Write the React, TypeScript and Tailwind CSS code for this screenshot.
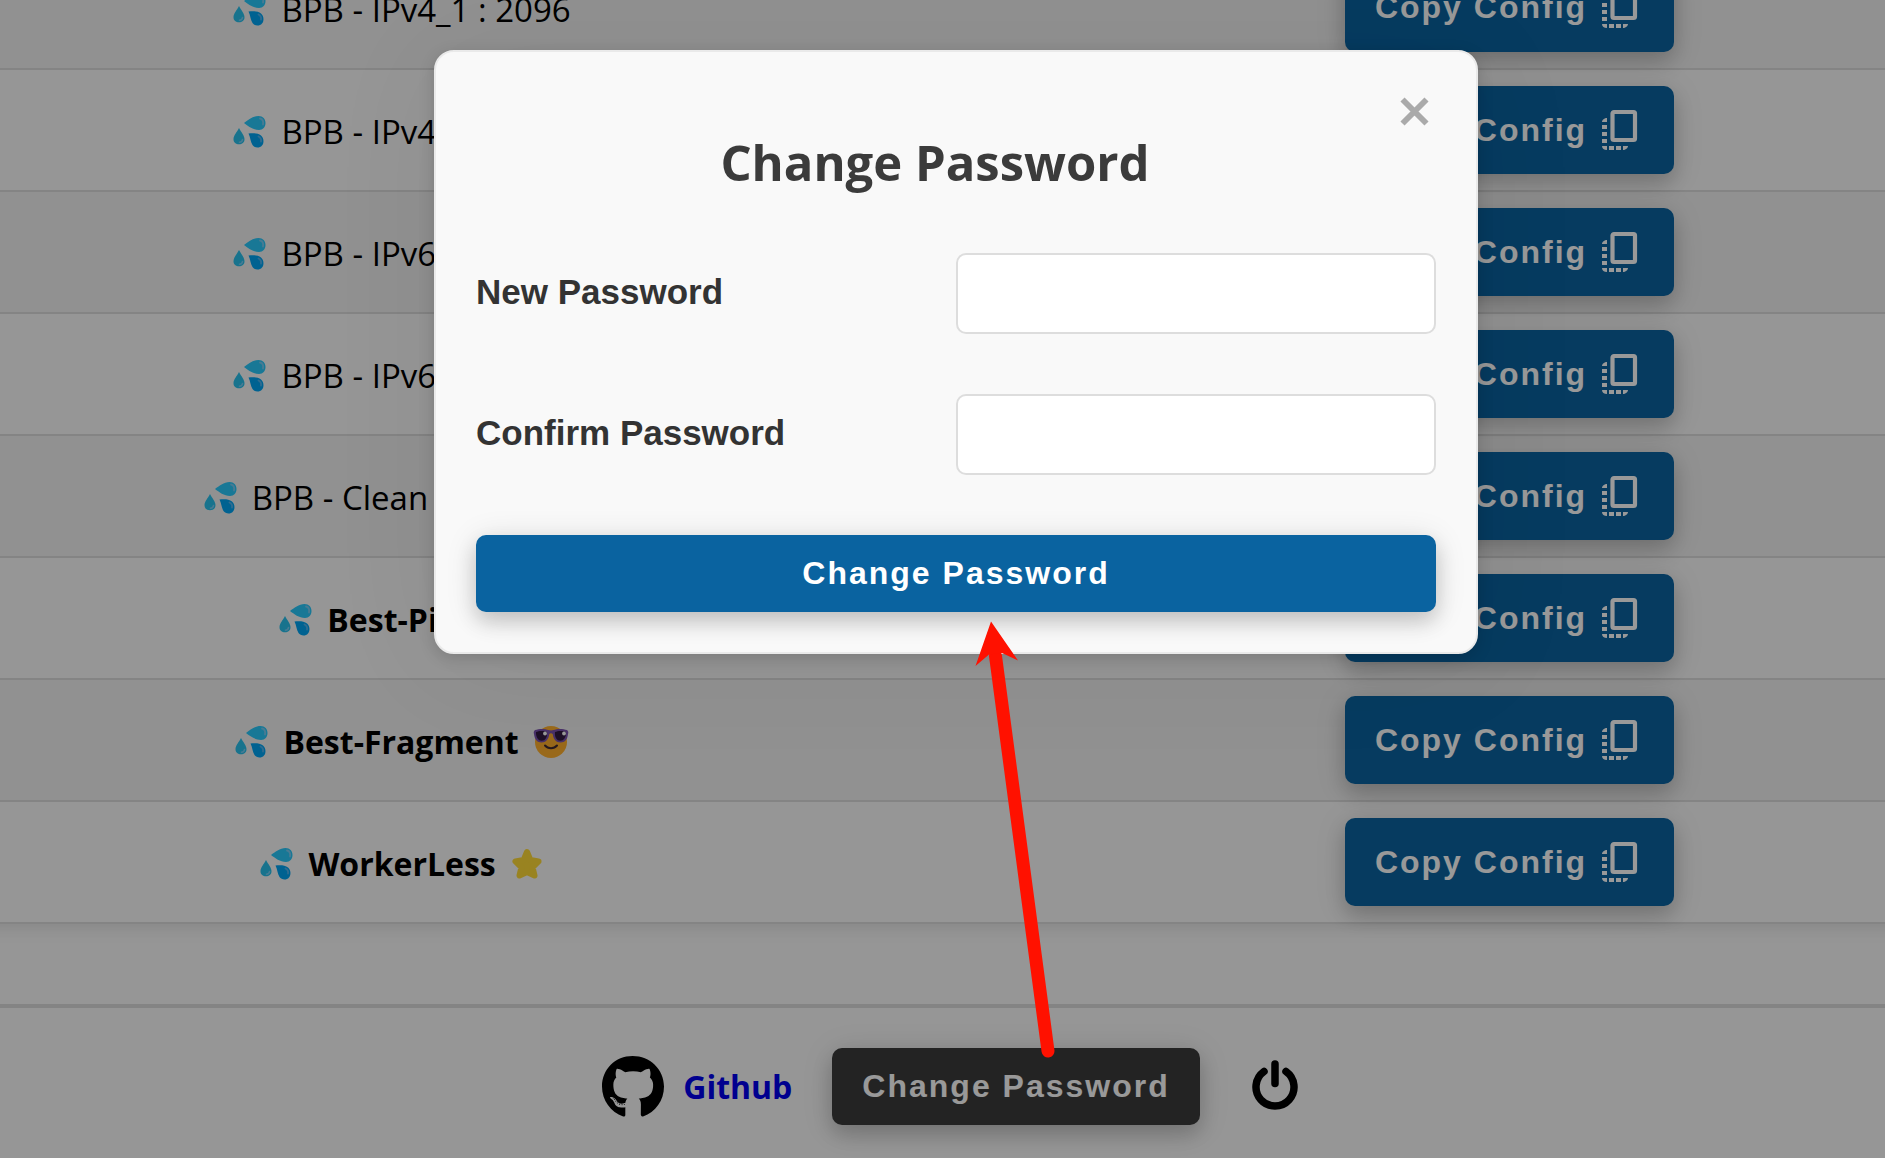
import type { ReactNode } from "react";
import { FaGithub } from "react-icons/fa";

function Drops() {
  return (
    <svg viewBox="0 0 34 34" className="size-[34px] shrink-0" aria-hidden="true">
      <path d="M11 8C15 5 20 1 25.500 1C30 1 32.500 4 32.500 8C32.500 12 30 15 26 15C20 15 15 11 11 8Z" fill="#28c8fa" />
      <path d="M27 3.500C29.500 4 30.500 6.500 30 9.500" stroke="#78cdf5" strokeWidth="1.800" strokeLinecap="round" fill="none" />
      <path d="M6 13C8 17 11.500 20.500 11.500 24.200C11.500 27.500 9 29.200 6 29.200C3 29.200 .5 27.500 .5 24.200C.5 20.500 4 17 6 13Z" fill="#28c0ec" />
      <path d="M9.500 24.500C9.300 26 8 27.200 6.500 27.300" stroke="#78cdf5" strokeWidth="1.600" strokeLinecap="round" fill="none" />
      <path d="M15.500 18.500C20 18 25 18 28 20.500C31 23 31.200 28 29 30.500C26.500 33.500 21.500 33 19.500 30C17.500 27 17.500 22.500 15.500 18.500Z" fill="#00a4f2" />
      <path d="M25.500 21.500C27.500 22.500 28.500 24 28 26.500" stroke="#50b4f0" strokeWidth="1.800" strokeLinecap="round" fill="none" />
    </svg>
  );
}

function CoolFace() {
  return (
    <svg viewBox="0 0 36 34" className="h-[34px] w-[36px] shrink-0" aria-hidden="true">
      <circle cx="18" cy="17" r="16" fill="#ffb02e" />
      <path d="M2 5C6 3.500 12 3.500 15.500 5C17 5.600 19 5.600 20.500 5C24 3.500 30 3.500 34 5C35.500 6 35.500 8 35 9C34.500 14 32 17.500 27.500 17.500C23 17.500 20.500 14.500 19.700 9C18.800 8 17.200 8 16.300 9C15.500 14.500 13 17.500 8.500 17.500C4 17.500 1.500 14 1 9C.5 8 .5 6 2 5Z" fill="#7b53ad" />
      <path d="M3 7C6 5.500 11 5.500 14 7C14.500 12 12.500 15.800 8.700 15.800C5 15.800 2.800 12 3 7Z" fill="#321b41" />
      <path d="M22 7C25 5.500 30 5.500 33 7C33.200 12 31 15.800 27.300 15.800C23.500 15.800 21.500 12 22 7Z" fill="#321b41" />
      <circle cx="12" cy="8.500" r="1.900" fill="#fff" />
      <circle cx="31" cy="8.500" r="1.900" fill="#fff" />
      <path d="M12 20.500C15 24 21 24 24 20.500" stroke="#402a32" strokeWidth="2" strokeLinecap="round" fill="none" />
    </svg>
  );
}

function Star() {
  return (
    <svg viewBox="0 0 34 34" className="size-[34px] shrink-0" aria-hidden="true">
      <path d="M17 5L20.300 13L28.500 14.400L22.500 20.300L24.500 28.500L17 25L9.500 28.500L11.500 20.300L5.500 14.400L13.700 13Z" fill="#ffda37" stroke="#ffda37" strokeWidth="6" strokeLinejoin="round" />
    </svg>
  );
}

function Burst() {
  return (
    <svg viewBox="0 0 34 34" className="size-[34px] shrink-0" aria-hidden="true">
      <path d="M17 1L21 10L31 6L26 15L33 20L24 23L25 32L17 26L9 32L10 23L1 20L8 15L3 6L13 10Z" fill="#f92f60" />
    </svg>
  );
}

function CopyIcon() {
  return (
    <svg viewBox="0 0 48 48" className="size-12 shrink-0" fill="currentColor" aria-hidden="true">
      <rect x="16.500" y="6" width="22.500" height="28" rx="1.500" fill="none" stroke="currentColor" strokeWidth="4.200" />
      <path d="M11 12V16H6C6 14 8.500 12 11 12ZM6 19H11V23H6ZM6 26H11V30H6ZM6 33H11V37H6ZM6 40H11V44C8 44 6 42.500 6 40ZM13 40H18V44H13ZM20 40H25V44H20ZM27 40H32C32 42 29.500 44 27 44Z" />
    </svg>
  );
}

function PowerIcon() {
  return (
    <svg viewBox="0 0 46 50" className="h-[50px] w-[46px]" fill="none" stroke="currentColor" strokeWidth="7.500" strokeLinecap="round" aria-hidden="true">
      <path d="M23 4V23.500" />
      <path d="M12 11.500A19 19 0 1 0 34 11.500" />
    </svg>
  );
}

type Row = { label: string; bold?: boolean; tail?: ReactNode };

const rows: Row[] = [
  { label: "BPB - IPv4_1 : 2096" },
  { label: "BPB - IPv4_2 : 2096" },
  { label: "BPB - IPv6_1 : 2096" },
  { label: "BPB - IPv6_2 : 2096" },
  { label: "BPB - Clean IP_1 : 2096" },
  { label: "Best-Ping", bold: true, tail: <Burst /> },
  { label: "Best-Fragment", bold: true, tail: <CoolFace /> },
  { label: "WorkerLess", bold: true, tail: <Star /> },
];

const buttonBase =
  "rounded-[10px] font-['Liberation_Sans',Arial,sans-serif] text-[32px] leading-[37px] font-bold tracking-[2px] text-white shadow-[0_10px_20px_rgba(0,0,0,0.16),0_4px_32px_rgba(0,0,0,0.12)]";

function ConfigTable() {
  return (
    <table className="-mt-[53px] -ml-[8.75%] w-[117.5%] table-fixed border-collapse shadow-[0_4px_16px_rgba(0,0,0,0.1)]">
      <colgroup>
        <col className="w-[51.2%]" />
        <col />
      </colgroup>
      <tbody>
        {rows.map((row) => (
          <tr key={row.label} className="h-[122px] border-b-2 border-[#dddddd] odd:bg-[#f2f2f2] even:bg-[#fafafa]">
            <td className="p-0">
              <div
                className={
                  row.bold
                    ? "flex items-center justify-center gap-[14px] pt-1 text-[32px] font-bold"
                    : "flex items-center justify-center gap-[14px] pt-1 text-[33px]"
                }
              >
                <Drops />
                <span className="whitespace-nowrap">{row.label}</span>
                {row.tail}
              </div>
            </td>
            <td className="p-0 text-center">
              <button type="button" className={`${buttonBase} inline-flex h-[88px] items-center gap-[9px] bg-[#0a63a0] px-[30px] align-middle whitespace-nowrap`}>
                Copy Config
                <CopyIcon />
              </button>
            </td>
          </tr>
        ))}
      </tbody>
    </table>
  );
}

function Footer() {
  return (
    <footer className="mt-20 flex items-center justify-center border-t-4 border-[#dddddd] pt-10 pb-8 pl-[14px]">
      <FaGithub className="size-16 text-black" aria-hidden="true" />
      <a href="#github" className="ml-[18px] text-[32px] font-bold text-[#0000ee]">
        Github
      </a>
      <button type="button" className={`${buttonBase} ml-10 bg-[#3b3b3b] px-[30px] py-5`}>
        Change Password
      </button>
      <button type="button" aria-label="Log out" className="ml-[52px] pb-1 text-black">
        <PowerIcon />
      </button>
    </footer>
  );
}

const fields = [
  { id: "new-password", label: "New Password" },
  { id: "confirm-password", label: "Confirm Password" },
];

function PasswordModal() {
  return (
    <div className="absolute inset-0 flex items-start justify-center bg-black/40 pt-[50px] pl-[27px]">
      <form
        role="dialog"
        aria-labelledby="modal-title"
        className="w-full max-w-[1044px] rounded-[20px] border-2 border-[#eaeaea] bg-[#f9f9f9] p-10 shadow-[0_4px_16px_rgba(0,0,0,0.15),0_8px_120px_rgba(0,0,0,0.06)]"
      >
        <div className="flex h-[161px] items-start gap-[6px]">
          <h2 id="modal-title" className="flex-1 pt-10 text-center text-[49px] leading-[60px] font-bold text-[#3b3b3b]">
            Change Password
          </h2>
          <button type="button" aria-label="Close" className="mt-[5px] mr-[7px] text-[#aaaaaa]">
            <svg viewBox="0 0 29 29" className="size-[29px]" aria-hidden="true">
              <path d="M2.500 2.500L26.500 26.500M26.500 2.500L2.500 26.500" stroke="currentColor" strokeWidth="5.800" />
            </svg>
          </button>
        </div>
        <div className="flex flex-col gap-[60px]">
          {fields.map((field) => (
            <div key={field.id} className="grid grid-cols-2 items-center">
              <label htmlFor={field.id} className="pb-1 font-['Liberation_Sans',Arial,sans-serif] text-[35px] leading-[40px] font-bold text-[#333333]">
                {field.label}
              </label>
              <input id={field.id} type="password" className="h-[81px] w-full rounded-[10px] border-2 border-[#dddddd] bg-white px-5 text-[32px]" />
            </div>
          ))}
          <button type="button" className={`${buttonBase} w-full bg-[#0a63a0] py-5`}>
            Change Password
          </button>
        </div>
      </form>
    </div>
  );
}

function Arrow() {
  return (
    <svg viewBox="0 0 82 440" className="pointer-events-none absolute top-[620px] left-[974px] h-[440px] w-[82px]" aria-hidden="true">
      <path d="M21.500 36L74 431" stroke="#ff1100" strokeWidth="13" strokeLinecap="round" />
      <path d="M17 1.500L1.500 46L15 34.500L28 33L44 40.500Z" fill="#ff1100" />
    </svg>
  );
}

export default function App() {
  return (
    <div className="relative min-h-screen overflow-hidden bg-[#fafafa] font-['Open_Sans','Noto_Sans',sans-serif] text-black">
      <ConfigTable />
      <Footer />
      <PasswordModal />
      <Arrow />
    </div>
  );
}
